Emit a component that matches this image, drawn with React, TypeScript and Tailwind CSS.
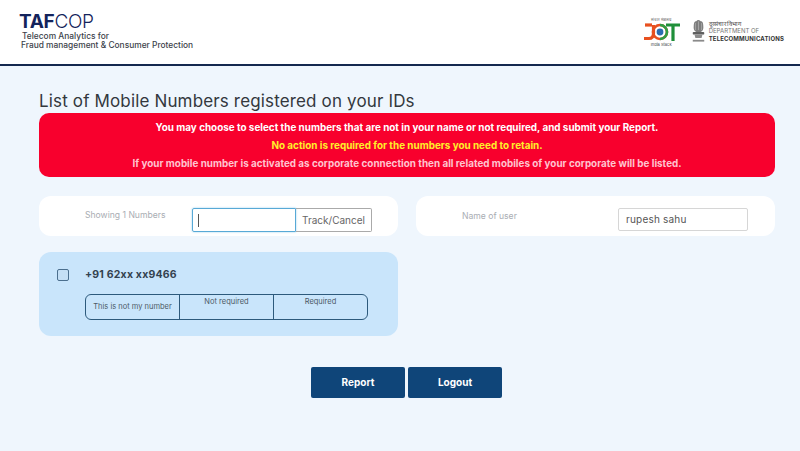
const font = { fontFamily: '"Inter", "Liberation Sans", sans-serif' };

function DotLogo() {
  return (
    <div className="flex w-[37px] flex-col items-center">
      <span className="text-[4px] leading-[5px] text-[#444]">संचार मंत्रालय</span>
      <svg width="37" height="18" viewBox="0 0 37 18" className="mt-[1px]">
        <path d="M1 15.5 L6 15.5 Q10.5 15.5 10.5 10 L10.5 2" fill="none" stroke="#e8501f" strokeWidth="3.2" />
        <path d="M2 2 L9 2" stroke="#e8501f" strokeWidth="3.2" />
        <circle cx="17" cy="9" r="7" fill="none" stroke="#e8501f" strokeWidth="2.6" />
        <path d="M17 2 A7 7 0 0 1 17 16" fill="none" stroke="#2f9e44" strokeWidth="2.6" />
        <circle cx="17" cy="9" r="3.4" fill="#2b6cb0" />
        <path d="M23 2 H37 M30 2 V18" stroke="#1f8f3a" strokeWidth="3.2" fill="none" />
      </svg>
      <span className="mt-[1px] text-[4px] leading-[5px] text-[#444]">India Stack</span>
    </div>
  );
}

function Emblem() {
  return (
    <svg width="15" height="28" viewBox="0 0 17 28">
      <path d="M3 10 Q3 2 6 3 Q8 0 11 3 Q14 2 14 10 Q14 14 11 15 L6 15 Q3 14 3 10Z" fill="#7d7d7d" />
      <path d="M5 5 V13 M8.5 3 V13 M12 5 V13" stroke="#b5b5b5" strokeWidth="0.8" />
      <rect x="2" y="15" width="13" height="3" rx="1" fill="#5f5f5f" />
      <path d="M4 18 L5 22 H12 L13 18Z" fill="#8c8c8c" />
      <rect x="2" y="24" width="13" height="2" fill="#8a8a8a" />
    </svg>
  );
}

export default function App() {
  return (
    <div style={font} className="flex h-[451px] w-[800px] flex-col overflow-hidden bg-[#eff6fd]">
      <header className="flex h-[66px] shrink-0 items-start justify-between border-b-[2px] border-[#14284f] bg-white pl-[19px] pr-[16px]">
        <div className="pt-[12px]">
          <div className="h-[19px] text-[19px] leading-[19px] tracking-[-0.3px] text-[#13235b]">
            <span className="font-bold">TAF</span>
            <span className="font-light">COP</span>
          </div>
          <div className="pl-[2px] pt-[1px] text-[8.4px] font-medium leading-[9px] text-[#3c3f4a]">
            <div className="pl-[1px]">Telecom Analytics for</div>
            <div>Fraud management &amp; Consumer Protection</div>
          </div>
        </div>
        <div className="flex items-start gap-[11px] pt-[17px]">
          <DotLogo />
          <div className="flex gap-[3px]">
            <Emblem />
            <div className="pt-[3px]">
              <div className="text-[6px] leading-[7px] text-[#444]">दूरसंचार विभाग</div>
              <div className="text-[6px] leading-[8px] text-[#777]">DEPARTMENT OF</div>
              <div className="text-[6px] font-bold leading-[8px] tracking-[0.15px] text-[#333]">TELECOMMUNICATIONS</div>
            </div>
          </div>
        </div>
      </header>

      <main className="flex flex-1 flex-col pl-[39px]">
        <h1 className="mt-[24px] text-[17px] font-normal leading-[22px] tracking-[0.15px] text-[#33383d]">
          List of Mobile Numbers registered on your IDs
        </h1>
        <div className="mt-[1px] flex h-[64px] w-[736px] flex-col items-center justify-center gap-[5px] rounded-[10px] bg-[#f8002d] text-[9.9px] font-bold leading-[13px]">
          <p className="text-white">You may choose to select the numbers that are not in your name or not required, and submit your Report.</p>
          <p className="text-[#fff02a]">No action is required for the numbers you need to retain.</p>
          <p className="text-[#ffc4cf]">If your mobile number is activated as corporate connection then all related mobiles of your corporate will be listed.</p>
        </div>

        <div className="mt-[19px] grid grid-cols-[359px_359px] gap-x-[18px]">
          <div className="flex h-[40px] items-start rounded-[12px] bg-white pl-[46px] pt-[12px]">
            <span className="w-[107px] pt-[2px] text-[8.6px] leading-[10px] text-[#a9adb3]">Showing 1 Numbers</span>
            <div className="flex h-[24px] w-[180px]">
              <div className="flex w-[104px] items-center rounded-l-[2px] border-[1.5px] border-[#58a9d6] pl-[5px] shadow-[0_0_2px_#8cc8ea]">
                <span className="h-[13px] w-[1px] bg-[#555]" />
              </div>
              <div className="flex flex-1 items-center justify-center rounded-r-[2px] border-[1px] border-l-0 border-[#aaa] text-[10px] text-[#666]">
                Track/Cancel
              </div>
            </div>
          </div>
          <div className="flex h-[40px] items-start rounded-[12px] bg-white pl-[46px] pt-[12px]">
            <span className="w-[156px] pt-[3px] text-[8.6px] leading-[10px] text-[#a9adb3]">Name of user</span>
            <div className="flex h-[23px] w-[130px] items-center rounded-[2px] border border-[#d6d6d6] pl-[7px] text-[10px] tracking-[0.2px] text-[#555]">
              rupesh sahu
            </div>
          </div>
        </div>

        <div className="mt-[16px] h-[84px] w-[359px] rounded-[12px] bg-[#c9e5fb] pl-[18px] pt-[15px]">
          <div className="flex items-center">
            <span className="h-[12px] w-[12px] rounded-[2px] border border-[#4b6f8e] bg-[#c4dff5]" />
            <span className="ml-[16px] text-[10.5px] font-bold tracking-[0.2px] text-[#33424f]">+91 62xx xx9466</span>
          </div>
          <div className="ml-[28px] mt-[11px] flex h-[26px] w-[283px] rounded-[6px] border border-[#2d5a7c] text-[7.5px] text-[#4c5a66]">
            <div className="flex w-[94px] items-center justify-center border-r border-[#2d5a7c]">This is not my number</div>
            <div className="w-[94px] border-r border-[#2d5a7c] pt-[1px] text-center">Not required</div>
            <div className="flex-1 pt-[1px] text-center">Required</div>
          </div>
        </div>

        <div className="mt-[31px] flex gap-[3px] pl-[272px]">
          <button className="h-[31px] w-[94px] rounded-[2px] bg-[#0f4579] text-[10px] font-bold text-white">Report</button>
          <button className="h-[31px] w-[94px] rounded-[2px] bg-[#0f4579] text-[10px] font-bold text-white">Logout</button>
        </div>
      </main>
    </div>
  );
}
